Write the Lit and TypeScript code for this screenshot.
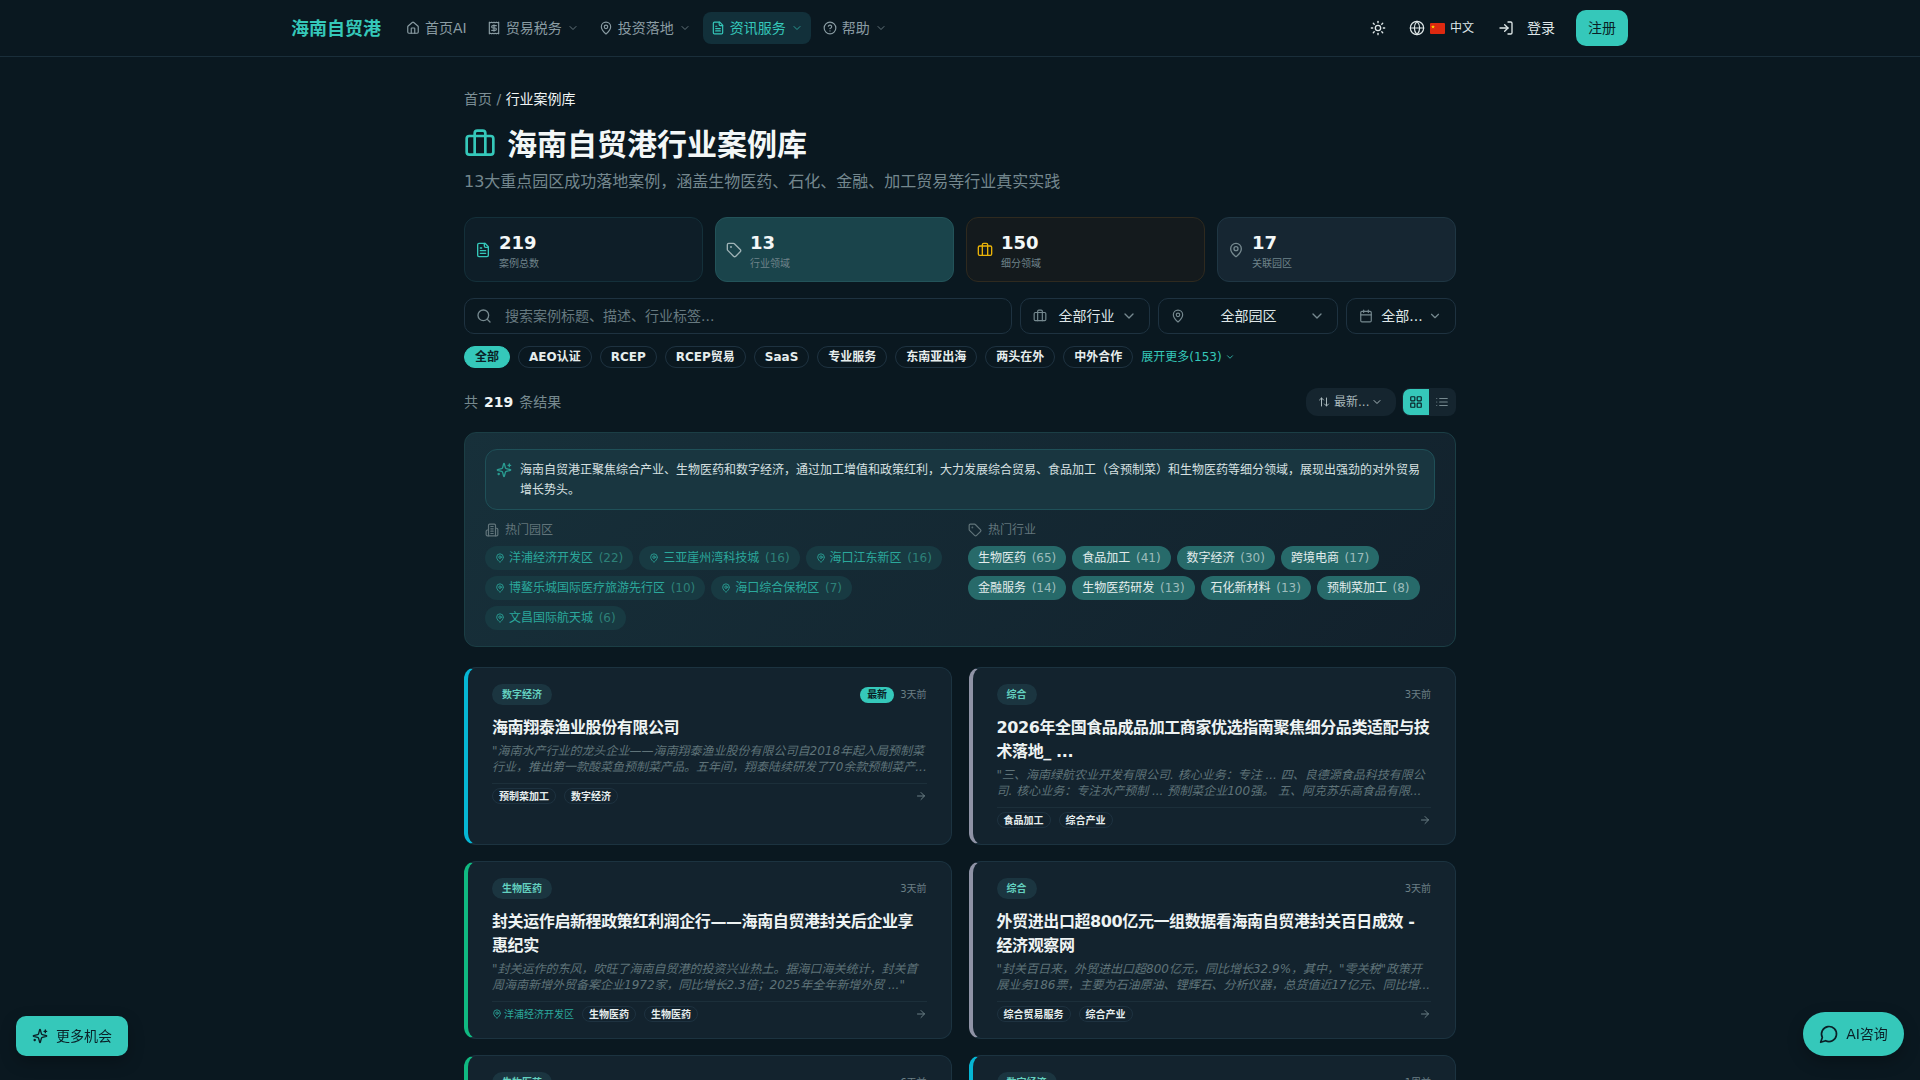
import { LitElement, html, css, svg } from "lit";
import { customElement } from "lit/decorators.js";

const ICONS: Record<string, any> = {
  home: svg`<path d="M15 21v-8a1 1 0 0 0-1-1h-4a1 1 0 0 0-1 1v8"/><path d="M3 10a2 2 0 0 1 .709-1.528l7-5.999a2 2 0 0 1 2.582 0l7 5.999A2 2 0 0 1 21 10v9a2 2 0 0 1-2 2H5a2 2 0 0 1-2-2z"/>`,
  receipt: svg`<path d="M4 2v20l2-1 2 1 2-1 2 1 2-1 2 1 2-1 2 1V2l-2 1-2-1-2 1-2-1-2 1-2-1-2 1Z"/><path d="M16 8h-6a2 2 0 1 0 0 4h4a2 2 0 1 1 0 4H8"/><path d="M12 17.5v-11"/>`,
  pin: svg`<path d="M20 10c0 4.993-5.539 10.193-7.399 11.799a1 1 0 0 1-1.202 0C9.539 20.193 4 14.993 4 10a8 8 0 0 1 16 0"/><circle cx="12" cy="10" r="3"/>`,
  file: svg`<path d="M15 2H6a2 2 0 0 0-2 2v16a2 2 0 0 0 2 2h12a2 2 0 0 0 2-2V7Z"/><path d="M14 2v4a2 2 0 0 0 2 2h4"/><path d="M10 9H8"/><path d="M16 13H8"/><path d="M16 17H8"/>`,
  help: svg`<circle cx="12" cy="12" r="10"/><path d="M9.09 9a3 3 0 0 1 5.83 1c0 2-3 3-3 3"/><path d="M12 17h.01"/>`,
  chev: svg`<path d="m6 9 6 6 6-6"/>`,
  sun: svg`<circle cx="12" cy="12" r="4"/><path d="M12 2v2"/><path d="M12 20v2"/><path d="m4.93 4.93 1.41 1.41"/><path d="m17.66 17.66 1.41 1.41"/><path d="M2 12h2"/><path d="M20 12h2"/><path d="m6.34 17.66-1.41 1.41"/><path d="m19.07 4.93-1.41 1.41"/>`,
  globe: svg`<circle cx="12" cy="12" r="10"/><path d="M12 2a14.5 14.5 0 0 0 0 20 14.5 14.5 0 0 0 0-20"/><path d="M2 12h20"/>`,
  login: svg`<path d="M15 3h4a2 2 0 0 1 2 2v14a2 2 0 0 1-2 2h-4"/><path d="m10 17 5-5-5-5"/><path d="M15 12H3"/>`,
  brief: svg`<path d="M16 20V4a2 2 0 0 0-2-2h-4a2 2 0 0 0-2 2v16"/><rect width="20" height="14" x="2" y="6" rx="2"/>`,
  tag: svg`<path d="M12.586 2.586A2 2 0 0 0 11.172 2H4a2 2 0 0 0-2 2v7.172a2 2 0 0 0 .586 1.414l8.704 8.704a2.426 2.426 0 0 0 3.42 0l6.58-6.58a2.426 2.426 0 0 0 0-3.42z"/><circle cx="7.5" cy="7.5" r=".5" fill="currentColor"/>`,
  search: svg`<path d="m21 21-4.34-4.34"/><circle cx="11" cy="11" r="8"/>`,
  cal: svg`<path d="M8 2v4"/><path d="M16 2v4"/><rect width="18" height="18" x="3" y="4" rx="2"/><path d="M3 10h18"/>`,
  sort: svg`<path d="m21 16-4 4-4-4"/><path d="M17 20V4"/><path d="m3 8 4-4 4 4"/><path d="M7 4v16"/>`,
  grid: svg`<rect width="7" height="7" x="3" y="3" rx="1"/><rect width="7" height="7" x="14" y="3" rx="1"/><rect width="7" height="7" x="14" y="14" rx="1"/><rect width="7" height="7" x="3" y="14" rx="1"/>`,
  list: svg`<path d="M3 12h.01"/><path d="M3 18h.01"/><path d="M3 6h.01"/><path d="M8 12h13"/><path d="M8 18h13"/><path d="M8 6h13"/>`,
  spark: svg`<path d="M9.937 15.5A2 2 0 0 0 8.5 14.063l-6.135-1.582a.5.5 0 0 1 0-.962L8.5 9.936A2 2 0 0 0 9.937 8.5l1.582-6.135a.5.5 0 0 1 .963 0L14.063 8.5A2 2 0 0 0 15.5 9.937l6.135 1.581a.5.5 0 0 1 0 .964L15.5 14.063a2 2 0 0 0-1.437 1.437l-1.582 6.135a.5.5 0 0 1-.963 0z"/><path d="M20 3v4"/><path d="M22 5h-4"/><path d="M4 17v2"/><path d="M5 18H3"/>`,
  building: svg`<path d="M6 22V4a2 2 0 0 1 2-2h8a2 2 0 0 1 2 2v18Z"/><path d="M6 12H4a2 2 0 0 0-2 2v6a2 2 0 0 0 2 2h2"/><path d="M18 9h2a2 2 0 0 1 2 2v9a2 2 0 0 1-2 2h-2"/><path d="M10 6h4"/><path d="M10 10h4"/><path d="M10 14h4"/><path d="M10 18h4"/>`,
  msg: svg`<path d="M7.9 20A9 9 0 1 0 4 16.1L2 22Z"/>`,
  arrow: svg`<path d="M5 12h14"/><path d="m12 5 7 7-7 7"/>`,
};

const ic = (name: string, size = 14, sw = 2) => html`<svg class="ic" width=${size} height=${size} viewBox="0 0 24 24" fill="none" stroke="currentColor" stroke-width=${sw} stroke-linecap="round" stroke-linejoin="round">${ICONS[name]}</svg>`;

interface Card { tag: string; date: string; title: string; desc: string; tags: string[]; color: string; isNew?: boolean; zone?: string; }

const CARDS: Card[] = [
  { tag: "数字经济", date: "3天前", isNew: true, color: "#06b6d4", title: "海南翔泰渔业股份有限公司",
    desc: "\"海南水产行业的龙头企业——海南翔泰渔业股份有限公司自2018年起入局预制菜行业，推出第一款酸菜鱼预制菜产品。五年间，翔泰陆续研发了70余款预制菜产...",
    tags: ["预制菜加工", "数字经济"] },
  { tag: "综合", date: "3天前", color: "#8f93a6", title: "2026年全国食品成品加工商家优选指南聚焦细分品类适配与技术落地_ ...",
    desc: "\"三、海南绿航农业开发有限公司. 核心业务：专注 ... 四、良德源食品科技有限公司. 核心业务：专注水产预制 ... 预制菜企业100强。 五、阿克苏乐高食品有限...",
    tags: ["食品加工", "综合产业"] },
  { tag: "生物医药", date: "3天前", color: "#10b981", title: "封关运作启新程政策红利润企行——海南自贸港封关后企业享惠纪实",
    desc: "\"封关运作的东风，吹旺了海南自贸港的投资兴业热土。据海口海关统计，封关首周海南新增外贸备案企业1972家，同比增长2.3倍；2025年全年新增外贸 ...\"",
    tags: ["生物医药", "生物医药"], zone: "洋浦经济开发区" },
  { tag: "综合", date: "3天前", color: "#8f93a6", title: "外贸进出口超800亿元一组数据看海南自贸港封关百日成效 - 经济观察网",
    desc: "\"封关百日来，外贸进出口超800亿元，同比增长32.9%，其中，\"零关税\"政策开展业务186票，主要为石油原油、锂辉石、分析仪器，总货值近17亿元、同比增...",
    tags: ["综合贸易服务", "综合产业"] },
  { tag: "生物医药", date: "6天前", color: "#10b981", title: "", desc: "", tags: [] },
  { tag: "数字经济", date: "1周前", color: "#06b6d4", title: "", desc: "", tags: [] },
];

@customElement("app-root")
export class AppRoot extends LitElement {
  static styles = css`
    :host { display: block; min-height: 100vh; background: #0a1820; color: #f0f5f5;
      font-family: "DejaVu Sans", "Noto Sans CJK SC", sans-serif; font-size: 14px; line-height: 1.5; }
    * { box-sizing: border-box; }
    .ic { flex: none; display: block; }
    header { height: 57px; border-bottom: 1px solid #1a2e3a; display: flex; align-items: center;
      padding: 0 292px 0 291px; background: #0a1820; }
    .logo { font-size: 18px; font-weight: 700; color: #35c8ba; margin-right: 17px; white-space: nowrap; }
    nav { display: flex; gap: 4px; flex: 1; }
    .ni { height: 32px; padding: 0 8px; display: flex; align-items: center; gap: 5px; border-radius: 8px;
      color: #8a9ca3; white-space: nowrap; }
    .ni .chev { opacity: .7; }
    .ni.on { background: #12303a; color: #35c8ba; }
    .right { display: flex; align-items: center; color: #dfe7e8; }
    .sun { margin-right: 23px; }
    .lang { display: flex; align-items: center; font-size: 12px; gap: 5px; margin-right: 24px; }
    .flag { display: block; flex: none; }
    .login { display: flex; align-items: center; gap: 13px; font-size: 14px; margin-right: 21px; }
    .reg { height: 36px; width: 52px; border-radius: 10px; background: #35c8ba; color: #0a1f26;
      display: flex; align-items: center; justify-content: center; }

    main { width: 992px; margin: 0 auto; padding-top: 32px; }
    .crumb { line-height: 20px; color: #7d8f96; }
    .crumb b { font-weight: 400; color: #f0f5f5; }
    .title { display: flex; align-items: center; gap: 11px; margin-top: 18px; color: #35c8ba; }
    .title .ic { margin-top: -2px; }
    h1 { margin: 0; font-size: 30px; line-height: 36px; font-weight: 700; color: #f3f7f7; }
    .sub { margin-top: 7px; font-size: 16px; line-height: 24px; color: #74878e; }

    .stats { display: grid; grid-template-columns: repeat(4, 1fr); gap: 12px; margin-top: 23px; }
    .stat { height: 65px; border-radius: 12px; border: 1px solid; display: flex; align-items: center; gap: 8px; padding: 0 10px; }
    .stat .n { font-size: 18px; line-height: 28px; padding-top: 1px; height: 29px; font-weight: 700; color: #f3f7f7; }
    .stat .l { font-size: 10px; line-height: 14px; color: #6f838a; }
    .s1 { background: #0e1e28; border-color: #14303a; color: #35c8ba; }
    .s2 { background: #1a444b; border-color: #235359; color: #9fb3b6; }
    .s3 { background: #141a1d; border-color: #2f2a1f; color: #eab308; }
    .s4 { background: #162632; border-color: #1f3643; color: #76898f; }

    .filters { display: flex; gap: 8px; margin-top: 16px; }
    .box { height: 36px; border: 1px solid #1e3240; border-radius: 10px; display: flex; align-items: center; color: #76898f; }
    .srch { flex: 1; padding: 0 11px; gap: 13px; }
    .srch span { color: #66797f; }
    .sel { padding: 0 12px; }
    .sel .t { color: #dfe7e8; flex: 1; min-width: 0; white-space: nowrap; text-align: center; }
    .w1 { width: 130px; } .w2 { width: 180px; } .w3 { width: 110px; padding-right: 13px; }
    .w1 .t { padding-left: 5px; } .w2 .t { padding-left: 3px; } .w3 .t { padding-left: 3px; }

    .pills { display: flex; align-items: center; gap: 8px; margin-top: 12px; }
    .pill { height: 22px; padding: 0 10px; border-radius: 11px; border: 1px solid #1e3240; font-size: 12px; font-weight: 700;
      display: flex; align-items: center; white-space: nowrap; color: #e6eded; }
    .pill.on { background: #35c8ba; border-color: #35c8ba; color: #0a1f26; }
    .more { display: flex; align-items: center; gap: 3px; font-size: 12px; color: #35c8ba; white-space: nowrap; }

    .res { display: flex; align-items: center; margin-top: 20px; height: 28px; color: #76898f; }
    .res b { color: #f0f5f5; margin: 0 6px; font-weight: 700; }
    .sp { flex: 1; }
    .sortb { width: 90px; height: 28px; border-radius: 12px; background: #15252f; display: flex; align-items: center; padding: 0 13px 0 12px; gap: 4px;
      font-size: 12px; color: #a9b8bc; }
    .sortb .t { flex: 1; min-width: 0; white-space: nowrap; }
    .view { margin-left: 6px; width: 54px; height: 28px; border-radius: 8px; background: #15252f; display: flex; padding: 1px; overflow: hidden; }
    .view div { flex: 1; display: flex; align-items: center; justify-content: center; color: #76898f; }
    .view .on { background: #35c8ba; color: #0a1f26; border-radius: 7px 0 0 7px; }

    .panel { margin-top: 16px; padding: 16px 20px; border: 1px solid #1b3e45; border-radius: 12px;
      background: linear-gradient(135deg, #17303a, #12212c); }
    .ins { display: flex; gap: 8px; padding: 10px 10px 9px; background: #193640; border: 1px solid #1f5058; border-radius: 12px;
      font-size: 12px; line-height: 20px; color: #d6e0e0; }
    .ins .ic { color: #2a9d92; margin-top: 2px; }
    .hot { display: grid; grid-template-columns: 1fr 1fr; gap: 16px; margin-top: 12px; }
    .hl { display: flex; align-items: center; gap: 6px; font-size: 12px; line-height: 16px; color: #62757b; margin-bottom: 8px; }
    .chips { display: flex; flex-wrap: wrap; gap: 6px; }
    .chip { height: 24px; padding: 0 10px; border-radius: 12px; display: flex; align-items: center; gap: 4px; font-size: 12px; white-space: nowrap; }
    .ca { background: #183a42; color: #2ba89c; }
    .ca i { color: #2d8078; font-style: normal; margin-left: 1.8px; }
    .cb { background: #276a6a; color: #e2ecec; }
    .cb i { color: #9dbcbc; font-style: normal; margin-left: 1.8px; }

    .cards { display: grid; grid-template-columns: 1fr 1fr; gap: 16px 17px; margin-top: 20px; padding-bottom: 40px; }
    .card { border: 1px solid #1c3340; border-left: 4px solid; border-radius: 12px; background: #13232e; padding: 16px 24px 16px 24px; min-width: 0; }
    .top { display: flex; align-items: center; height: 21px; }
    .ct { height: 21px; padding: 0 10px; border-radius: 11px; background: #1b3540; color: #63d0bf; font-size: 10px; font-weight: 700; display: flex; align-items: center; }
    .new { height: 16px; padding: 0 7px; border-radius: 8px; background: #35c8ba; color: #0a1f26; font-size: 10px; font-weight: 700; display: flex; align-items: center; margin-right: 6px; }
    .date { font-size: 10px; color: #6b7f85; }
    h3 { margin: 11px 0 -1px; font-size: 16px; line-height: 24px; font-weight: 700; letter-spacing: -0.4px; color: #eef3f3; }
    .desc { margin: 4px -1px 0 0; font-size: 12px; line-height: 16px; font-style: italic; color: #5f7379; }
    .foot { margin-top: 8px; padding-top: 4px; border-top: 1px solid #1c2f3a; display: flex; align-items: center; gap: 8px; height: 21px; }
    .zone { display: flex; align-items: center; gap: 2px; font-size: 10px; color: #2ba89c; white-space: nowrap; }
    .t2 { height: 16px; padding: 0 6px; border: 1px solid #1e3240; border-radius: 8px; font-size: 10px; font-weight: 700; display: flex; align-items: center; color: #e6eded; white-space: nowrap; }
    .go { margin-left: auto; color: #6b7f85; }

    .fab { position: fixed; bottom: 24px; height: 40px; display: flex; align-items: center; justify-content: center; gap: 8px;
      background: #35c8ba; color: #0a1f26; box-shadow: 0 6px 16px rgba(0,0,0,.25); white-space: nowrap; }
    .fl { left: 16px; width: 112px; border-radius: 10px; }
    .fr { right: 16px; width: 101px; height: 44px; border-radius: 22px; gap: 7px; }
  `;

  private ni(label: string, icon: string, chev = true, on = false) {
    return html`<div class="ni ${on ? "on" : ""}">${ic(icon, 14)}<span>${label}</span>${chev ? html`<span class="chev">${ic("chev", 12)}</span>` : ""}</div>`;
  }

  private card(c: Card) {
    return html`<div class="card" style="border-left-color:${c.color}">
      <div class="top"><div class="ct">${c.tag}</div><div class="sp"></div>${c.isNew ? html`<div class="new">最新</div>` : ""}<div class="date">${c.date}</div></div>
      ${c.title ? html`<h3>${c.title}</h3><div class="desc">${c.desc}</div>
      <div class="foot">${c.zone ? html`<div class="zone">${ic("pin", 10)}${c.zone}</div>` : ""}${c.tags.map((t) => html`<div class="t2">${t}</div>`)}<span class="go">${ic("arrow", 12)}</span></div>` : html`<div style="height:120px"></div>`}
    </div>`;
  }

  render() {
    const parks: [string, number][] = [["洋浦经济开发区", 22], ["三亚崖州湾科技城", 16], ["海口江东新区", 16], ["博鳌乐城国际医疗旅游先行区", 10], ["海口综合保税区", 7], ["文昌国际航天城", 6]];
    const inds: [string, number][] = [["生物医药", 65], ["食品加工", 41], ["数字经济", 30], ["跨境电商", 17], ["金融服务", 14], ["生物医药研发", 13], ["石化新材料", 13], ["预制菜加工", 8]];
    const pills = ["AEO认证", "RCEP", "RCEP贸易", "SaaS", "专业服务", "东南亚出海", "两头在外", "中外合作"];
    return html`
      <header>
        <div class="logo">海南自贸港</div>
        <nav>
          ${this.ni("首页AI", "home", false)}
          ${this.ni("贸易税务", "receipt")}
          ${this.ni("投资落地", "pin")}
          ${this.ni("资讯服务", "file", true, true)}
          ${this.ni("帮助", "help")}
        </nav>
        <div class="right">
          <span class="sun">${ic("sun", 16)}</span>
          <div class="lang">${ic("globe", 16, 1.8)}
            <svg class="flag" width="15" height="11" viewBox="0 0 15 11"><rect width="15" height="11" rx="1" fill="#de2910"/><path d="M3 2l.5 1.3H5l-1.1.8.4 1.3L3 4.6l-1.3.8.4-1.3L1 3.3h1.5z" fill="#ffde00"/></svg>
            <span>中文</span></div>
          <div class="login">${ic("login", 16)}<span>登录</span></div>
          <div class="reg">注册</div>
        </div>
      </header>
      <main>
        <div class="crumb">首页 / <b>行业案例库</b></div>
        <div class="title">${ic("brief", 32)}<h1>海南自贸港行业案例库</h1></div>
        <div class="sub">13大重点园区成功落地案例，涵盖生物医药、石化、金融、加工贸易等行业真实实践</div>

        <div class="stats">
          <div class="stat s1">${ic("file", 16)}<div><div class="n">219</div><div class="l">案例总数</div></div></div>
          <div class="stat s2">${ic("tag", 16)}<div><div class="n">13</div><div class="l">行业领域</div></div></div>
          <div class="stat s3">${ic("brief", 16)}<div><div class="n">150</div><div class="l">细分领域</div></div></div>
          <div class="stat s4">${ic("pin", 16)}<div><div class="n">17</div><div class="l">关联园区</div></div></div>
        </div>

        <div class="filters">
          <div class="box srch">${ic("search", 16)}<span>搜索案例标题、描述、行业标签...</span></div>
          <div class="box sel w1">${ic("brief", 14)}<span class="t">全部行业</span>${ic("chev", 16)}</div>
          <div class="box sel w2">${ic("pin", 14)}<span class="t">全部园区</span>${ic("chev", 16)}</div>
          <div class="box sel w3">${ic("cal", 14)}<span class="t">全部...</span>${ic("chev", 14)}</div>
        </div>

        <div class="pills">
          <div class="pill on">全部</div>
          ${pills.map((p) => html`<div class="pill">${p}</div>`)}
          <div class="more">展开更多(153)${ic("chev", 10)}</div>
        </div>

        <div class="res">共<b>219</b>条结果<div class="sp"></div>
          <div class="sortb">${ic("sort", 12)}<span class="t">最新...</span>${ic("chev", 12)}</div>
          <div class="view"><div class="on">${ic("grid", 14)}</div><div>${ic("list", 14)}</div></div>
        </div>

        <div class="panel">
          <div class="ins">${ic("spark", 16)}<span>海南自贸港正聚焦综合产业、生物医药和数字经济，通过加工增值和政策红利，大力发展综合贸易、食品加工（含预制菜）和生物医药等细分领域，展现出强劲的对外贸易增长势头。</span></div>
          <div class="hot">
            <div>
              <div class="hl">${ic("building", 14)}热门园区</div>
              <div class="chips">${parks.map(([n, c]) => html`<div class="chip ca">${ic("pin", 10)}<span>${n} <i>(${c})</i></span></div>`)}</div>
            </div>
            <div>
              <div class="hl">${ic("tag", 14)}热门行业</div>
              <div class="chips">${inds.map(([n, c]) => html`<div class="chip cb"><span>${n} <i>(${c})</i></span></div>`)}</div>
            </div>
          </div>
        </div>

        <div class="cards">${CARDS.map((c) => this.card(c))}</div>
      </main>
      <div class="fab fl">${ic("spark", 16)}<span>更多机会</span></div>
      <div class="fab fr">${ic("msg", 20)}<span>AI咨询</span></div>
    `;
  }
}
